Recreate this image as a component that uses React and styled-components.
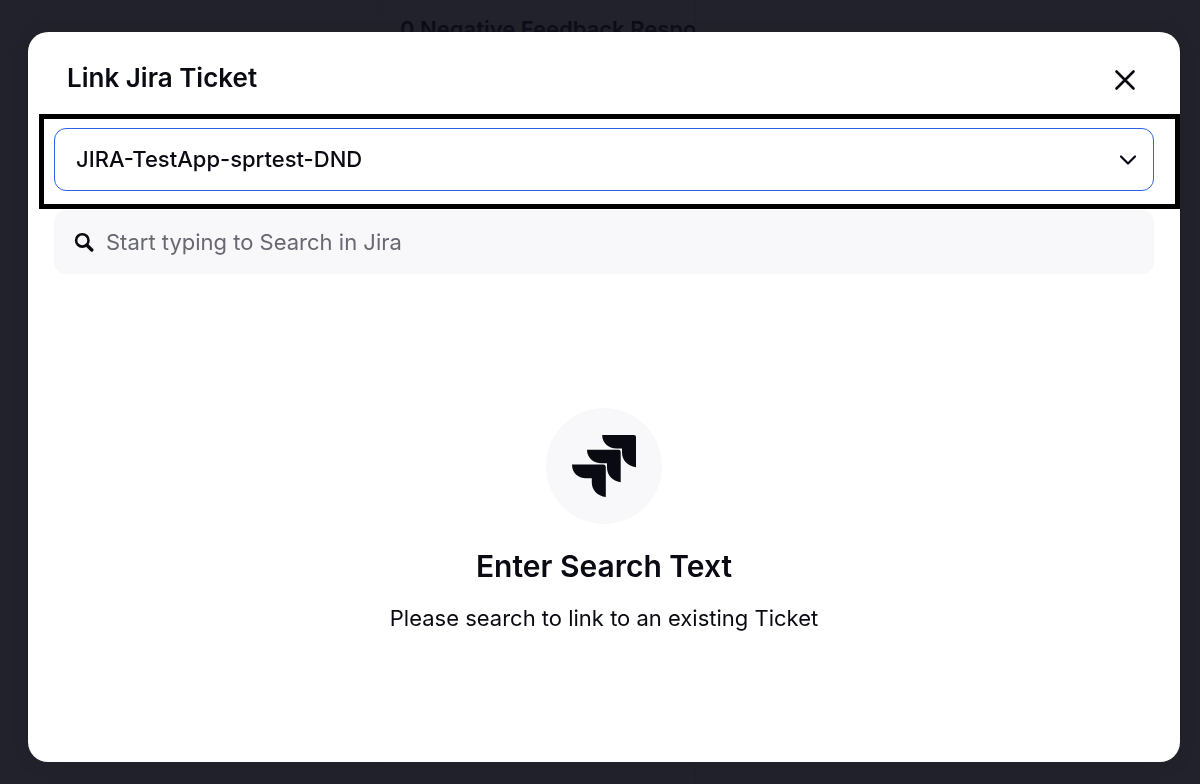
import React from "react";
import styled, { createGlobalStyle } from "styled-components";

const ink = "#090a12";
const tint = "#f8f8fa";

const GlobalStyle = createGlobalStyle`
  *, *::before, *::after { box-sizing: border-box; }
  html, body, #root { height: 100%; }
  body {
    margin: 0;
    background: #22222c;
    color: ${ink};
    font-family: Inter, "Liberation Sans", sans-serif;
    overflow: hidden;
  }
`;

const Board = styled.div`
  display: grid;
  grid-template-columns: 381px 314px 1fr;
  height: 100%;
`;

const Column = styled.div`
  padding: 15px 18px;
  border-left: 1px solid #20202a;
`;

const ColumnTitle = styled.p`
  margin: 0;
  font-size: 22px;
  line-height: 28px;
  font-weight: 600;
  color: #0c0c17;
  white-space: nowrap;
`;

const Overlay = styled.div`
  position: fixed;
  inset: 0;
  display: flex;
  padding: 32px 20px 22px 28px;
`;

const Dialog = styled.section`
  flex: 1;
  display: flex;
  flex-direction: column;
  border-radius: 20px;
  background: #fff;
  box-shadow: 0 2px 12px rgba(32, 32, 36, 0.6);
`;

const Header = styled.header`
  display: flex;
  align-items: center;
  justify-content: space-between;
  height: 82px;
  padding: 10px 39px 0;
`;

const Title = styled.h1`
  margin: 0;
  font-size: 26px;
  line-height: 32px;
  font-weight: 600;
`;

const CloseButton = styled.button`
  display: flex;
  align-items: center;
  justify-content: center;
  width: 32px;
  height: 32px;
  padding: 4px 0 0;
  border: 0;
  background: none;
  color: inherit;
`;

const Highlight = styled.div`
  margin-left: 11px;
  padding: 9px 21px 13px 10px;
  border: 5px solid #000;
`;

const SelectField = styled.div`
  position: relative;
`;

const Select = styled.select`
  appearance: none;
  display: block;
  width: 100%;
  height: 63px;
  padding: 0 56px 2px 21px;
  border: 1px solid #2e62e6;
  border-radius: 12px;
  background: #fff;
  color: ${ink};
  font: 500 22px/28px Inter, "Liberation Sans", sans-serif;
`;

const SelectArrow = styled.svg`
  position: absolute;
  top: 22px;
  right: 16px;
  pointer-events: none;
`;

const SearchField = styled.label`
  display: flex;
  align-items: center;
  gap: 12px;
  height: 64px;
  margin: 1px 26px 0;
  padding: 0 20px;
  border-radius: 12px;
  background: ${tint};
`;

const SearchInput = styled.input`
  flex: 1;
  min-width: 0;
  padding: 0;
  border: 0;
  outline: 0;
  background: none;
  color: ${ink};
  font: 400 22px/28px Inter, "Liberation Sans", sans-serif;
  &::placeholder { color: #686873; opacity: 1; }
`;

const EmptyState = styled.div`
  flex: 1;
  display: flex;
  flex-direction: column;
  align-items: center;
  justify-content: center;
  padding: 4px 26px 0;
  text-align: center;
`;

const LogoDisc = styled.div`
  display: flex;
  align-items: center;
  justify-content: center;
  width: 116px;
  height: 116px;
  border-radius: 50%;
  background: ${tint};
`;

const EmptyTitle = styled.h2`
  margin: 20px 0 16px;
  font-size: 30px;
  line-height: 44px;
  font-weight: 600;
`;

const EmptyText = styled.p`
  margin: 0;
  font-size: 22px;
  line-height: 28px;
`;

function JiraLogo() {
  return (
    <svg width="66" height="64" viewBox="0 0 66 64" fill={ink} aria-hidden="true">
      <path d="M31.2 1H63Q65 1 65 3V33.2C56.5 32 51 26 51 18.5V14.5H45.5C37.5 14.5 31.2 9 31.2 1Z" />
      <path d="M16 15.7H47.5Q49.7 15.7 49.7 18V48.2C41.3 47 36 41 36 33.5V29.3H30.5C22.5 29.3 16 23.8 16 15.7Z" />
      <path d="M1 30.5H32.5Q34.8 30.5 34.8 33V63C26.3 62 20.8 56 20.8 48.5V44.3H15C7 44.3 1 38.8 1 30.5Z" />
    </svg>
  );
}

export default function App() {
  return (
    <>
      <GlobalStyle />
      <Board aria-hidden="true">
        <div />
        <Column>
          <ColumnTitle>0 Negative Feedback Respo</ColumnTitle>
        </Column>
        <Column />
      </Board>
      <Overlay>
        <Dialog role="dialog" aria-modal="true" aria-labelledby="dialog-title">
          <Header>
            <Title id="dialog-title">Link Jira Ticket</Title>
            <CloseButton type="button" aria-label="Close">
              <svg width="22" height="22" viewBox="0 0 22 22" fill="none" stroke="currentColor" strokeWidth="2.6" strokeLinecap="round">
                <path d="M2.5 2.5L19.5 19.5M19.5 2.5L2.5 19.5" />
              </svg>
            </CloseButton>
          </Header>
          <Highlight>
            <SelectField>
              <Select aria-label="Jira application" defaultValue="sprtest">
                <option value="sprtest">JIRA-TestApp-sprtest-DND</option>
              </Select>
              <SelectArrow width="20" height="20" viewBox="0 0 20 20" fill="none" stroke={ink} strokeWidth="2.2" strokeLinecap="round" strokeLinejoin="round" aria-hidden="true">
                <path d="M3 6.5L10 13.5L17 6.5" />
              </SelectArrow>
            </SelectField>
          </Highlight>
          <SearchField>
            <svg width="20" height="20" viewBox="0 0 20 20" fill="none" stroke={ink} aria-hidden="true">
              <circle cx="8.3" cy="8.4" r="6.2" strokeWidth="2.6" />
              <path d="M13 13.2L17.8 18" strokeWidth="3.4" strokeLinecap="round" />
            </svg>
            <SearchInput type="text" aria-label="Search in Jira" placeholder="Start typing to Search in Jira" />
          </SearchField>
          <EmptyState>
            <LogoDisc>
              <JiraLogo />
            </LogoDisc>
            <EmptyTitle>Enter Search Text</EmptyTitle>
            <EmptyText>Please search to link to an existing Ticket</EmptyText>
          </EmptyState>
        </Dialog>
      </Overlay>
    </>
  );
}
